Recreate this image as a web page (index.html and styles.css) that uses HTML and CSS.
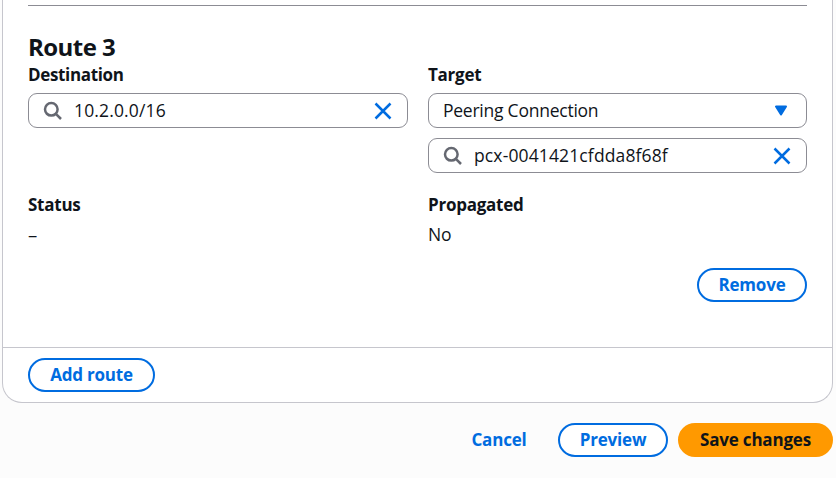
FILE: index.html
```
<!DOCTYPE html>
<html lang="en">
<head>
<meta charset="utf-8">
<title>Edit routes</title>
<link rel="stylesheet" href="styles.css">
</head>
<body>
<main class="panel">
  <section class="route">
    <h2>Route 3</h2>
    <div class="grid">
      <div class="field">
        <h3 class="tight">Destination</h3>
        <div class="input">
          <svg class="search" viewBox="0 0 20 20"><circle cx="8.3" cy="8.3" r="6.3"/><path d="M12.6 12.6 18 18"/></svg>
          <span class="value">10.2.0.0/16</span>
          <svg class="clear" viewBox="0 0 18 18"><path d="M1.5 1.5l15 15M16.5 1.5l-15 15"/></svg>
        </div>
      </div>
      <div class="field">
        <h3>Target</h3>
        <div class="input select">
          <span class="value">Peering Connection</span>
          <svg class="caret" viewBox="0 0 14 11"><path d="M2 1.5h10L7 9.5z"/></svg>
        </div>
        <div class="input">
          <svg class="search" viewBox="0 0 20 20"><circle cx="8.3" cy="8.3" r="6.3"/><path d="M12.6 12.6 18 18"/></svg>
          <span class="value id">pcx-0041421cfdda8f68f</span>
          <svg class="clear" viewBox="0 0 18 18"><path d="M1.5 1.5l15 15M16.5 1.5l-15 15"/></svg>
        </div>
      </div>
      <div class="field"><h3>Status</h3><p class="dash">–</p></div>
      <div class="field"><h3>Propagated</h3><p>No</p></div>
    </div>
    <div class="end"><button class="btn remove">Remove</button></div>
  </section>
  <footer class="foot"><button class="btn add">Add route</button></footer>
</main>
<div class="actions">
  <button class="btn link">Cancel</button>
  <button class="btn preview">Preview</button>
  <button class="btn primary">Save changes</button>
</div>
</body>
</html>
```
FILE: styles.css
```
* { box-sizing: border-box; }
body {
  margin: 0;
  height: 478px;
  overflow: hidden;
  background: #fcfcfc;
  color: #0f141a;
  font: 17.5px/25px "Open Sans", "Noto Sans", sans-serif;
}
h2, h3, p { margin: 0; }
.panel {
  width: 831px;
  height: 403px;
  margin-left: 2px;
  background: #fff;
  border: 1px solid #c6c6cd;
  border-top: 0;
  border-radius: 0 0 20px 20px;
}
.route {
  height: 347px;
  margin: 0 25px;
  padding-top: 5px;
}
.route::before { content: ""; display: block; height: 1px; background: #8c8c94; }
h2 { margin-top: 26px; font-size: 24px; line-height: 30px; font-weight: 700; letter-spacing: -0.55px; }
h3 { font-size: 17px; line-height: 25px; font-weight: 700; letter-spacing: -0.25px; }
.tight { letter-spacing: -0.35px; }
.grid { display: grid; grid-template-columns: 380px 379px; column-gap: 20px; row-gap: 19px; }
.input {
  display: flex;
  align-items: center;
  height: 35px;
  margin-top: 6px;
  padding: 0 15px 0 14px;
  border: 1px solid #8c8c94;
  border-radius: 9px;
}
.input + .input { margin-top: 10px; }
.value { flex: 1; white-space: nowrap; letter-spacing: 0.15px; }
.id { letter-spacing: 0.13px; }
.select .value { letter-spacing: -0.24px; }
svg { fill: none; flex: none; }
.search { width: 20px; height: 20px; margin-right: 11px; stroke: #656871; stroke-width: 2.5; }
.clear { width: 18px; height: 18px; stroke: #006ce0; stroke-width: 2.5; }
.caret { width: 14px; height: 11px; margin-right: 3px; fill: #006ce0; stroke: #006ce0; stroke-width: 2; stroke-linejoin: round; }
.field p { margin-top: 5px; letter-spacing: -0.3px; }
.field .dash { font-size: 18.5px; }
.end { display: flex; justify-content: flex-end; margin-top: 21px; }
.btn {
  height: 34px;
  padding: 0 0 2px;
  border: 2px solid #006ce0;
  border-radius: 17px;
  background: #fff;
  color: #006ce0;
  font: 700 17px/25px "Open Sans", "Noto Sans", sans-serif;
  letter-spacing: -0.2px;
  white-space: nowrap;
}
.remove, .preview { width: 110px; }
.foot { height: 55px; margin: 0; padding: 10px 25px; border-top: 1px solid #c6c6cd; }
.add { width: 127px; }
.actions { display: flex; justify-content: flex-end; margin-top: 20px; padding-right: 3px; }
.link { width: 98px; margin-right: 10px; border-color: transparent; background: none; }
.primary { width: 155px; margin-left: 10px; border-color: #ff9900; background: #ff9900; color: #0f141a; }
```
